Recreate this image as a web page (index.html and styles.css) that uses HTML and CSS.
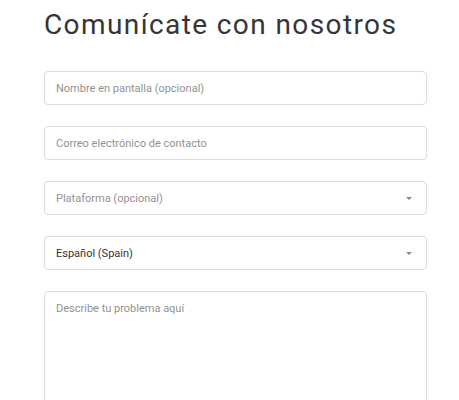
FILE: index.html
```html
<!DOCTYPE html>
<html lang="es">
<head>
<meta charset="utf-8">
<link rel="stylesheet" href="styles.css">
</head>
<body>
<main class="page">
  <h1 class="title">Comunícate con nosotros</h1>
  <form class="form">
    <div class="field"><span class="ph">Nombre en pantalla (opcional)</span></div>
    <div class="field"><span class="ph">Correo electrónico de contacto</span></div>
    <div class="field select"><span class="ph">Plataforma (opcional)</span><span class="caret"></span></div>
    <div class="field select"><span class="val">Español (Spain)</span><span class="caret"></span></div>
    <div class="field area"><span class="ph">Describe tu problema aquí</span></div>
  </form>
</main>
</body>
</html>
```
FILE: styles.css
```css
* { box-sizing: border-box; }
html, body { margin: 0; padding: 0; background: #fff; }
body { font-family: Roboto, "Noto Sans", sans-serif; }
.page { padding: 5px 32px 0 44px; }
.title {
  margin: 0;
  font-weight: 400;
  font-size: 28px;
  line-height: 40px;
  color: #363636;
  letter-spacing: 1.4px;
}
.form {
  margin-top: 26px;
  display: flex;
  flex-direction: column;
  gap: 21px;
}
.field {
  height: 34px;
  border: 1px solid #dcdcdc;
  border-radius: 4px;
  display: flex;
  align-items: center;
  justify-content: space-between;
  padding: 0 14px 0 11px;
  font-size: 11px;
}
.ph { color: #929292; }
.val { color: #333; }
.caret {
  width: 0; height: 0;
  border-left: 3.5px solid transparent;
  border-right: 3.5px solid transparent;
  border-top: 3.5px solid #8a8a8a;
  margin-top: 1px;
}
.area {
  height: 140px;
  align-items: flex-start;
  padding-top: 10px;
}
```
